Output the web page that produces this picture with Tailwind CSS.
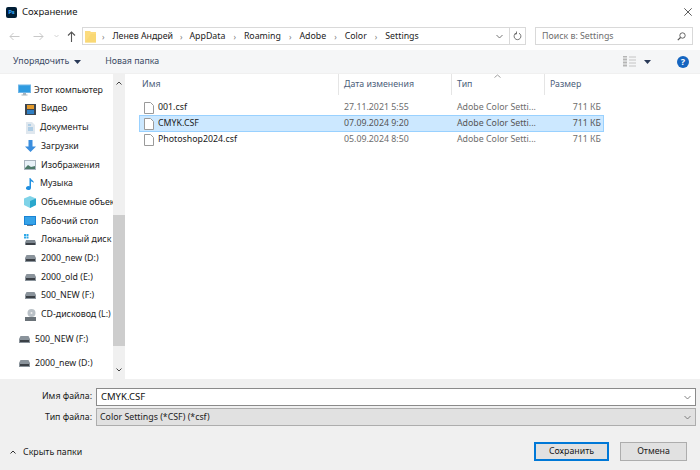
<!doctype html>
<html><head><meta charset="utf-8"><script src="https://cdn.jsdelivr.net/npm/@tailwindcss/browser@4"></script></head>
<body class="m-0">
<div class="w-[700px] h-[470px] overflow-hidden bg-white flex flex-col font-['Noto_Sans','Open_Sans',sans-serif] text-[8.8px] text-[#1a1a1a]">
  <!-- title -->
  <div class="h-[25px] flex items-center pl-[6px] pr-[8px] shrink-0">
    <div class="w-[11px] h-[11px] rounded-[2px] bg-[#001e36] text-[#31a8ff] text-[6px] font-bold leading-[11px] text-center">Ps</div>
    <span class="ml-[5px] text-[9.5px] mt-[-1px]">Сохранение</span>
    <svg class="ml-auto mt-[-2px]" width="8" height="8" viewBox="0 0 8 8"><path d="M.3.3l7.400 7.400M7.700.3L.3 7.700" stroke="#333" stroke-width=".8" fill="none"/></svg>
  </div>
  <!-- nav -->
  <div class="h-[25px] flex items-start pt-[2px] shrink-0 pl-[9px]">
    <div class="h-[18px] flex items-center">
      <svg width="11" height="9" viewBox="0 0 11 9"><path d="M10.500 4.500H1M4.500 1L1 4.500 4.500 8" stroke="#c8c8c8" stroke-width="1" fill="none"/></svg>
      <svg class="ml-[13px]" width="11" height="9" viewBox="0 0 11 9"><path d="M.5 4.500H10M6.500 1L10 4.500 6.500 8" stroke="#c8c8c8" stroke-width="1" fill="none"/></svg>
      <svg class="ml-[10px]" width="5" height="4" viewBox="0 0 5 4"><path d="M.5 1l2 2 2-2" stroke="#c8c8c8" stroke-width=".8" fill="none"/></svg>
      <svg class="ml-[8px]" width="9" height="11" viewBox="0 0 9 11"><path d="M4.500 11V1M1 4.500L4.500 1 8 4.500" stroke="#555" stroke-width="1.100" fill="none"/></svg>
    </div>
    <div class="ml-[6px] w-[444px] h-[18px] border border-[#d9d9d9] flex items-center pl-[2px] text-[#222]">
      <svg width="11" height="13" viewBox="0 0 11 13"><path d="M0 1h5l1 1h5v10.500H0z" fill="#fcdc7f"/><path d="M0 12.500h11V4H6z" fill="#f7d56c" opacity=".6"/></svg>
      <div class="flex items-center pt-[1px]">
        <span class="ml-[6px] text-[#777] text-[8px]">›</span><span class="ml-[8px]">Ленев Андрей</span>
        <span class="ml-[7px] text-[#777] text-[8px]">›</span><span class="ml-[7px]">AppData</span>
        <span class="ml-[8px] text-[#777] text-[8px]">›</span><span class="ml-[8px]">Roaming</span>
        <span class="ml-[8px] text-[#777] text-[8px]">›</span><span class="ml-[8px]">Adobe</span>
        <span class="ml-[8px] text-[#777] text-[8px]">›</span><span class="ml-[8px]">Color</span>
        <span class="ml-[8px] text-[#777] text-[8px]">›</span><span class="ml-[8px]">Settings</span>
      </div>
      <svg class="ml-auto mr-[6px]" width="7" height="5" viewBox="0 0 7 5"><path d="M.5 1l3 3 3-3" stroke="#666" stroke-width=".9" fill="none"/></svg>
      <div class="w-[16px] h-full border-l border-[#d9d9d9] flex items-center justify-center">
        <svg width="9" height="10" viewBox="0 0 9 10"><path d="M3 2.200a3.400 3.400 0 1 0 3 0M3.500 .5v2.500H1.500" stroke="#555" stroke-width=".8" fill="none"/></svg>
      </div>
    </div>
    <div class="ml-[9px] w-[158px] h-[18px] border border-[#d9d9d9] flex items-center pl-[6px] pr-[6px] text-[#6d6d6d]">
      <span class="pt-[1px]">Поиск в: Settings</span>
      <svg class="ml-auto" width="9" height="9" viewBox="0 0 9 9"><circle cx="5.500" cy="3.500" r="2.700" stroke="#555" fill="none" stroke-width=".9"/><path d="M3.500 5.500L.8 8.200" stroke="#555" stroke-width="1.200"/></svg>
    </div>
  </div>
  <!-- toolbar -->
  <div class="h-[24px] bg-[#f5f6f7] flex items-center shrink-0 pl-[13px] pr-[11px] text-[#3a4a64] border-b border-[#f0f0f0]">
    <span class="pt-[1px]">Упорядочить</span>
    <svg class="ml-[5px]" width="7" height="4" viewBox="0 0 7 4"><path d="M0 0h7L3.500 4z" fill="#2a3a58"/></svg>
    <span class="ml-[24px] pt-[1px]">Новая папка</span>
    <svg class="ml-auto" width="13" height="11" viewBox="0 0 13 11"><path d="M0 .5h4M0 3.500h4M0 6.500h4M0 9.500h4" stroke="#b5b5b5" stroke-width="2" fill="none"/><path d="M6 1h7M6 4h7M6 7h7M6 10h7" stroke="#c4c4c4" stroke-width="1" fill="none"/></svg>
    <svg class="ml-[8px]" width="7" height="4" viewBox="0 0 7 4"><path d="M0 0h7L3.500 4z" fill="#2a3a58"/></svg>
    <div class="ml-[26px] w-[12px] h-[12px] rounded-full bg-[#1565c0] text-white text-[9px] font-bold leading-[12px] text-center">?</div>
  </div>
  <!-- content -->
  <div class="flex-1 flex min-h-0">
    <!-- sidebar -->
    <div class="w-[113px] shrink-0 overflow-hidden pt-[7px] text-[#222] whitespace-nowrap">
      <div class="h-[18.700px] flex items-center pl-[18px]">
        <svg class="shrink-0" width="13" height="12" viewBox="0 0 13 12"><rect y=".5" width="13" height="8.500" fill="#6fb6e8"/><rect x="1" y="1.500" width="11" height="6.500" fill="#2f9be0"/><path d="M5 9h3v1.500H5zM3.500 10.500h6v1h-6z" fill="#a8b4bc"/></svg><span class="ml-[3px]">Этот компьютер</span>
      </div>
      <div class="h-[18.700px] flex items-center pl-[25px]">
        <svg class="shrink-0" width="11" height="11" viewBox="0 0 11 11"><rect width="11" height="11" fill="#3d4650"/><rect x="2" y="1" width="7" height="4" fill="#e39a2c"/><rect x="2" y="6" width="7" height="4" fill="#2f7fc4"/></svg><span class="ml-[5px]">Видео</span>
      </div>
      <div class="h-[18.700px] flex items-center pl-[26px]">
        <svg class="shrink-0" width="9" height="12" viewBox="0 0 9 12"><path d="M0 0h6l3 3v9H0z" fill="#dfe7ee"/><path d="M2 3h3M2 6h5M2 8h5" stroke="#7fb3dc" stroke-width="1"/></svg><span class="ml-[5px]">Документы</span>
      </div>
      <div class="h-[18.700px] flex items-center pl-[25px]">
        <svg class="shrink-0" width="11" height="12" viewBox="0 0 11 12"><path d="M3.500 0h4v6.500H11L5.500 12 0 6.500h3.500z" fill="#3b8ede"/></svg><span class="ml-[5px]">Загрузки</span>
      </div>
      <div class="h-[18.700px] flex items-center pl-[24px]">
        <svg class="shrink-0" width="12" height="10" viewBox="0 0 12 10"><rect width="12" height="10" fill="#a9b4bf"/><rect x="1" y="1" width="10" height="8" fill="#e8f1f8"/><path d="M1 8l3-3 3 2 4-1v3H1z" fill="#4d7a6a"/></svg><span class="ml-[5px]">Изображения</span>
      </div>
      <div class="h-[18.700px] flex items-center pl-[26px]">
        <svg class="shrink-0" width="9" height="12" viewBox="0 0 9 12"><path d="M3.500 0h1c.3 2 3.500 2.500 3.500 5-1-1-2.200-1.500-3-1.500V10a2.500 2 0 1 1-1.500-1.800z" fill="#1f8fe0"/></svg><span class="ml-[5px]">Музыка</span>
      </div>
      <div class="h-[18.700px] flex items-center pl-[24px]">
        <svg class="shrink-0" width="12" height="12" viewBox="0 0 12 12"><path d="M6 0l6 2.500V9l-6 3-6-3V2.500z" fill="#7fd3e8"/><path d="M6 5l6-2.500V9l-6 3z" fill="#2aa7cc"/></svg><span class="ml-[5px]">Объемные объекты</span>
      </div>
      <div class="h-[18.700px] flex items-center pl-[24px]">
        <svg class="shrink-0" width="12" height="10" viewBox="0 0 12 10"><rect width="12" height="9" fill="#1b83d4"/><rect x="1" y="1" width="10" height="7" fill="#36a3e8"/><rect x="3" y="9" width="6" height="1" fill="#6a7c8c"/></svg><span class="ml-[5px]">Рабочий стол</span>
      </div>
      <div class="h-[18.700px] flex items-center pl-[24px]">
        <svg class="shrink-0" width="12" height="12" viewBox="0 0 12 12"><path d="M0 0h2v2H0zM2.500 0h2v2h-2zM0 2.500h2v2H0zM2.500 2.500h2v2h-2z" fill="#2ea8e8"/><path d="M2 6h9l1 3v2H1V9z" fill="#7d8790"/><rect x="2" y="9" width="9" height="2" fill="#3b4046"/></svg><span class="ml-[5px]">Локальный диск</span>
      </div>
      <div class="h-[18.700px] flex items-center pl-[25px]">
        <svg class="shrink-0" width="11" height="7" viewBox="0 0 11 7"><path d="M1.500 0h8L11 3v4H0V3z" fill="#8a939b"/><rect x="1" y="4" width="9" height="2" fill="#3b4046"/></svg><span class="ml-[5px]">2000_new (D:)</span>
      </div>
      <div class="h-[18.700px] flex items-center pl-[25px]">
        <svg class="shrink-0" width="11" height="7" viewBox="0 0 11 7"><path d="M1.500 0h8L11 3v4H0V3z" fill="#8a939b"/><rect x="1" y="4" width="9" height="2" fill="#3b4046"/></svg><span class="ml-[5px]">2000_old (E:)</span>
      </div>
      <div class="h-[18.700px] flex items-center pl-[25px]">
        <svg class="shrink-0" width="11" height="7" viewBox="0 0 11 7"><path d="M1.500 0h8L11 3v4H0V3z" fill="#8a939b"/><rect x="1" y="4" width="9" height="2" fill="#3b4046"/></svg><span class="ml-[5px]">500_NEW (F:)</span>
      </div>
      <div class="h-[18.700px] flex items-center pl-[25px]">
        <svg class="shrink-0" width="11" height="12" viewBox="0 0 11 12"><circle cx="6.500" cy="4" r="4" fill="#b9c0c6"/><circle cx="6.500" cy="4" r="1" fill="#eee"/><rect y="8" width="11" height="4" fill="#6a7278"/></svg><span class="ml-[5px]">CD-дисковод (L:)</span>
      </div>
      <div class="h-[18.700px] mt-[6px] flex items-center pl-[19px]">
        <svg class="shrink-0" width="11" height="7" viewBox="0 0 11 7"><path d="M1.500 0h8L11 3v4H0V3z" fill="#8a939b"/><rect x="1" y="4" width="9" height="2" fill="#3b4046"/></svg><span class="ml-[5px]">500_NEW (F:)</span>
      </div>
      <div class="h-[18.700px] mt-[6px] flex items-center pl-[19px]">
        <svg class="shrink-0" width="11" height="7" viewBox="0 0 11 7"><path d="M1.500 0h8L11 3v4H0V3z" fill="#8a939b"/><rect x="1" y="4" width="9" height="2" fill="#3b4046"/></svg><span class="ml-[5px]">2000_new (D:)</span>
      </div>
    </div>
    <!-- scrollbar -->
    <div class="w-[12px] shrink-0 bg-[#f0f0f0] flex flex-col items-center">
      <svg class="mt-[7px]" width="6" height="4" viewBox="0 0 6 4"><path d="M.5 3.500L3 1l2.500 2.500" stroke="#444" stroke-width="1" fill="none"/></svg>
      <div class="mt-[130px] w-full h-[131px] bg-[#cdcdcd]"></div>
      <svg class="mt-auto mb-[7px]" width="6" height="4" viewBox="0 0 6 4"><path d="M.5.5L3 3 5.500.5" stroke="#444" stroke-width="1" fill="none"/></svg>
    </div>
    <!-- list -->
    <div class="flex-1 pl-[14px] pr-[96px] min-w-0 whitespace-nowrap">
      <div class="h-[23px] pb-[2px] flex text-[#4c607a] relative">
        <div class="w-[200px] pl-[3px] border-r border-[#e5e5e5] flex items-center">Имя</div>
        <div class="w-[113px] pl-[5px] border-r border-[#e5e5e5] flex items-center">Дата изменения</div>
        <div class="w-[93px] pl-[5px] border-r border-[#e5e5e5] flex items-center">Тип</div>
        <div class="pl-[5px] flex items-center">Размер</div>
        <svg class="absolute left-[355px] top-0" width="7" height="4" viewBox="0 0 7 4"><path d="M.5 3.500L3.500 1l3 2.500" stroke="#888" stroke-width=".8" fill="none"/></svg>
      </div>
      <div class="mt-[3px] h-[15px] flex items-center border border-transparent">
        <svg class="ml-[4px] shrink-0" width="10" height="12" viewBox="0 0 10 12"><path d="M.5.5h6l3 3v8H.5z" fill="#fff" stroke="#9a9a9a"/></svg>
        <span class="ml-[4px] w-[186px]">001.csf</span>
        <span class="w-[113px] text-[#6d6d6d]">27.11.2021 5:55</span>
        <span class="w-[84px] text-[#6d6d6d]">Adobe Color Setti...</span>
        <span class="w-[60px] text-right text-[#6d6d6d]">711 КБ</span>
      </div>
      <div class="h-[17px] flex items-center border border-[#99d1ff] bg-[#cce8ff]">
        <svg class="ml-[4px] shrink-0" width="10" height="12" viewBox="0 0 10 12"><path d="M.5.5h6l3 3v8H.5z" fill="#fff" stroke="#9a9a9a"/></svg>
        <span class="ml-[4px] w-[186px]">CMYK.CSF</span>
        <span class="w-[113px] text-[#555]">07.09.2024 9:20</span>
        <span class="w-[84px] text-[#555]">Adobe Color Setti...</span>
        <span class="w-[60px] text-right text-[#555]">711 КБ</span>
      </div>
      <div class="h-[16px] flex items-center border border-transparent">
        <svg class="ml-[4px] shrink-0" width="10" height="12" viewBox="0 0 10 12"><path d="M.5.5h6l3 3v8H.5z" fill="#fff" stroke="#9a9a9a"/></svg>
        <span class="ml-[4px] w-[186px]">Photoshop2024.csf</span>
        <span class="w-[113px] text-[#6d6d6d]">05.09.2024 8:50</span>
        <span class="w-[84px] text-[#6d6d6d]">Adobe Color Setti...</span>
        <span class="w-[60px] text-right text-[#6d6d6d]">711 КБ</span>
      </div>
    </div>
  </div>
  <!-- bottom -->
  <div class="h-[91px] shrink-0 bg-[#f0f0f0] pt-[9px] flex flex-col">
    <div class="flex items-center h-[18px] pr-[4px]">
      <span class="w-[92px] text-right">Имя файла:</span>
      <div class="ml-[4px] flex-1 h-[18px] bg-white border border-[#8a8a8a] flex items-center pl-[4px] pr-[4px] text-[#111] text-[9.500px]">
        <span>CMYK.CSF</span>
        <svg class="ml-auto" width="7" height="5" viewBox="0 0 7 5"><path d="M.5 1l3 3 3-3" stroke="#666" stroke-width=".8" fill="none"/></svg>
      </div>
    </div>
    <div class="flex items-center h-[18px] pr-[4px] mt-[2px]">
      <span class="w-[92px] text-right pt-[1px]">Тип файла:</span>
      <div class="ml-[4px] flex-1 h-[18px] bg-[#e1e1e1] border border-[#adadad] flex items-center pl-[3px] pr-[4px] text-[#222]">
        <span class="pt-[1px]">Color Settings (*CSF) (*csf)</span>
        <svg class="ml-auto" width="7" height="5" viewBox="0 0 7 5"><path d="M.5 1l3 3 3-3" stroke="#666" stroke-width=".8" fill="none"/></svg>
      </div>
    </div>
    <div class="flex items-center mt-[16px] pl-[10px] pr-[13px]">
      <svg width="6" height="4" viewBox="0 0 6 4"><path d="M.5 3.500L3 1l2.500 2.500" stroke="#333" stroke-width="1" fill="none"/></svg>
      <span class="ml-[7px] mt-[2px]">Скрыть папки</span>
      <div class="ml-auto w-[75px] h-[19px] bg-[#e1e1e1] border-2 border-[#0078d7] flex items-center justify-center">Сохранить</div>
      <div class="ml-[11px] w-[67px] h-[19px] bg-[#e1e1e1] border border-[#adadad] flex items-center justify-center">Отмена</div>
    </div>
  </div>
</div>
</body></html>
